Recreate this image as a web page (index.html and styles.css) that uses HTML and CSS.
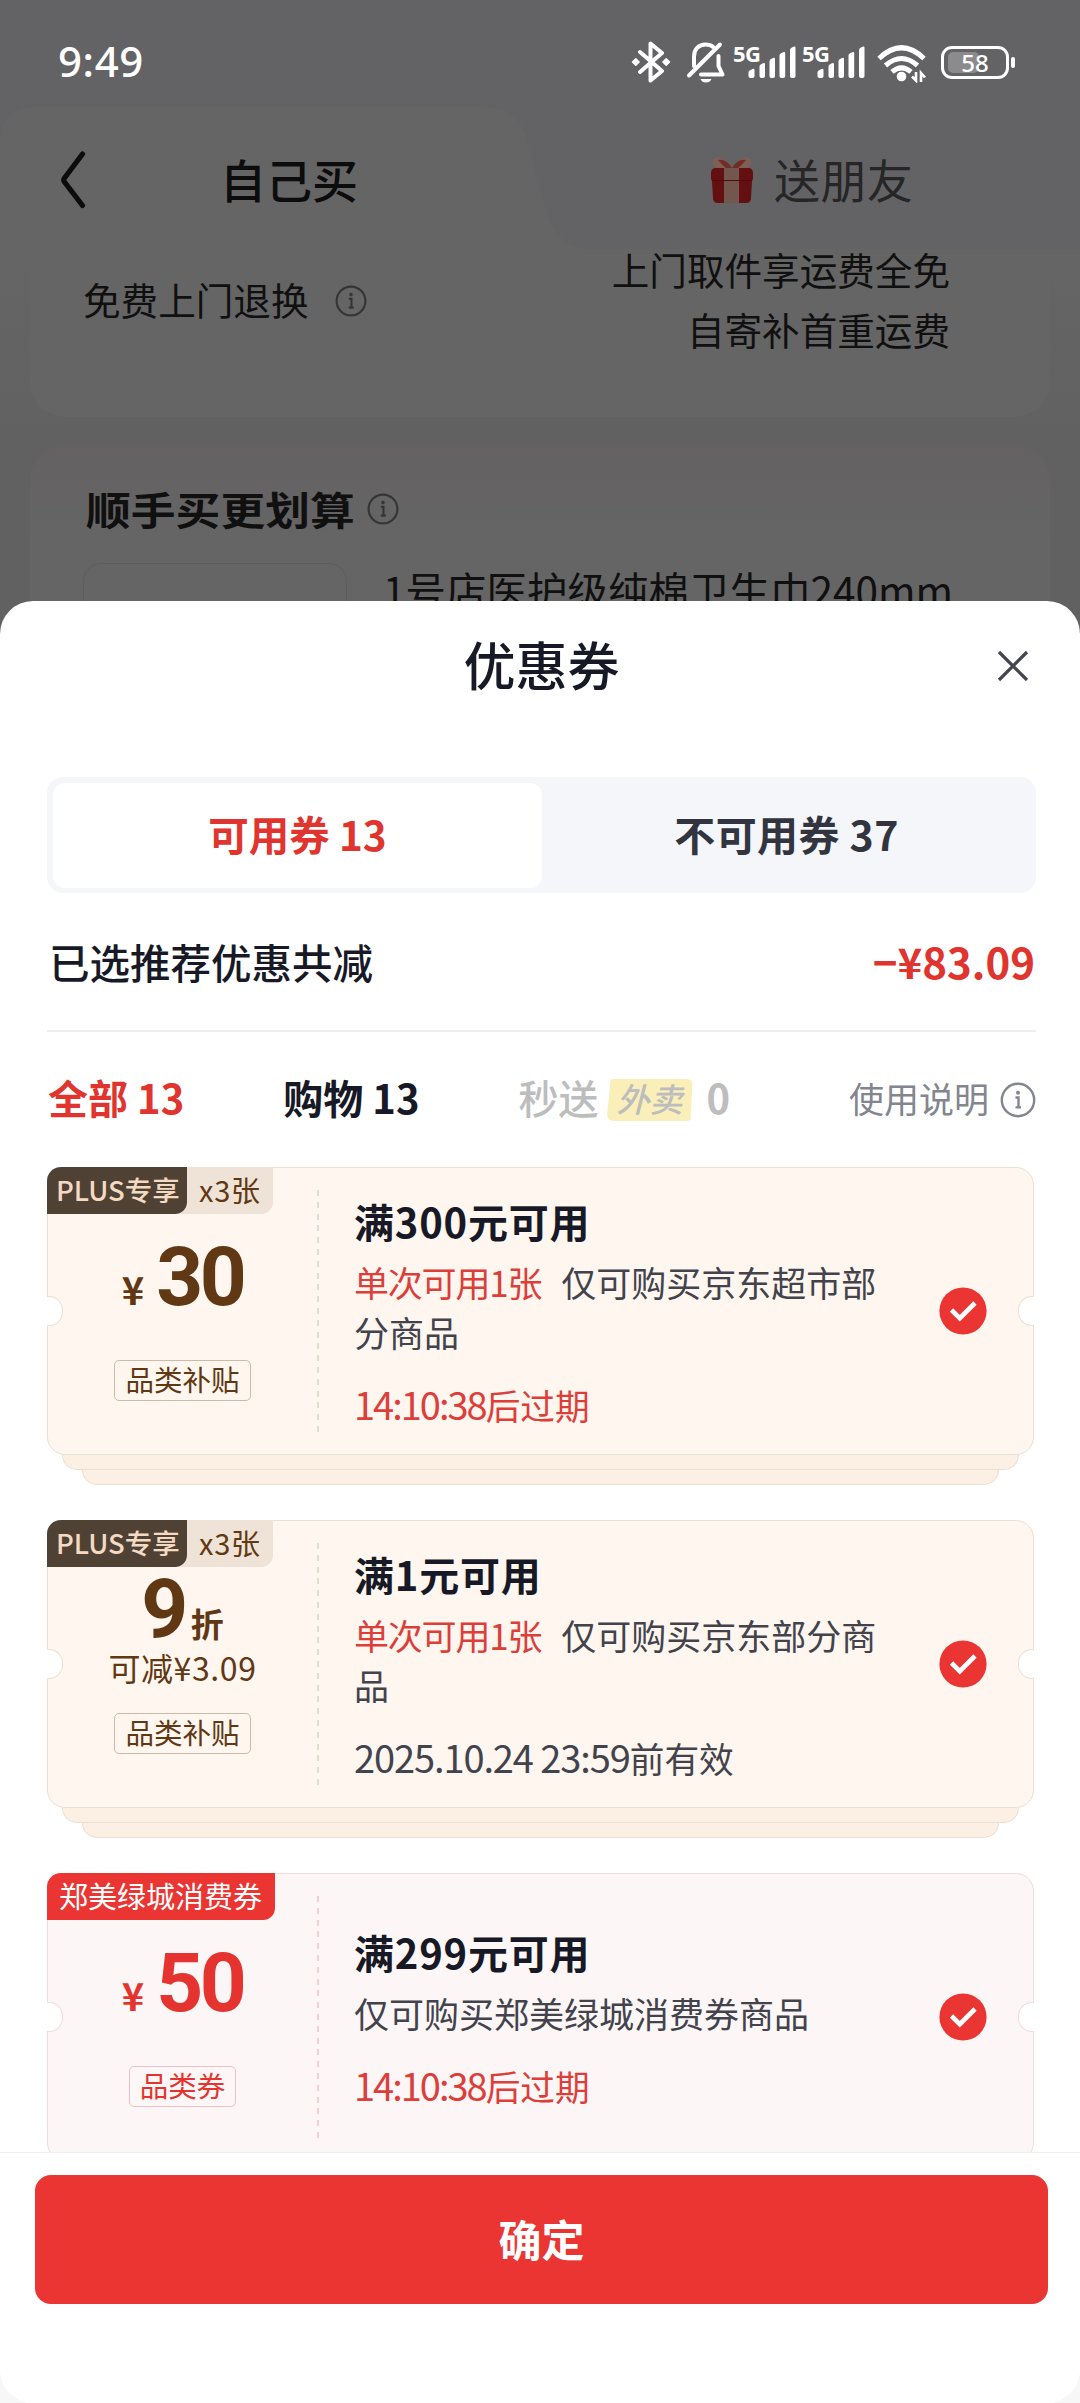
FILE: index.html
```html
<!DOCTYPE html>
<html lang="zh-CN">
<head>
<meta charset="utf-8">
<title>优惠券</title>
<link rel="stylesheet" href="styles.css">
</head>
<body>
<svg class="defs" aria-hidden="true">
  <symbol id="info" viewBox="0 0 36 36">
    <circle cx="18" cy="18" r="16.2" fill="none" stroke="currentColor" stroke-width="2.4"/>
    <circle cx="18" cy="10.8" r="2" fill="currentColor"/>
    <path d="M15.500 15.500h3v9.500M15.500 25.400h5.500" fill="none" stroke="currentColor" stroke-width="2.400"/>
  </symbol>
  <symbol id="check" viewBox="0 0 48 48">
    <circle cx="24" cy="24" r="23.6" fill="#ea3533"/>
    <path d="M12.500 23l8.300 8.200L36 16" fill="none" stroke="#fff" stroke-width="4.600"/>
  </symbol>
  <symbol id="signal" viewBox="0 0 63 34">
    <path d="M15.500 31v-3.500q0-1.500 1.500-2.200l2.500-1.200q2-.8 2 1V31q0 2-2 2H17.500q-2 0-2-2z"/>
    <path d="M26.500 31V21.500q0-1.500 1.500-2.200l2-1q2-.8 2 1V31q0 2-2 2h-1.500q-2 0-2-2z"/>
    <path d="M36.500 31V16.200q0-1.500 1.500-2.200l2-1q2-.8 2 1V31q0 2-2 2h-1.500q-2 0-2-2z"/>
    <path d="M46.500 31V10.500q0-1.500 1.500-2.200l2.200-1q2-.8 2 1V31q0 2-2 2h-1.700q-2 0-2-2z"/>
    <path d="M57 31V5q0-1.500 1.500-2.200l2-1q2-.8 2 1V31q0 2-2 2H59q-2 0-2-2z"/>
  </symbol>
</svg>

<div class="screen">
  <div class="page">
    <svg class="tab-shape" viewBox="0 0 1080 260" aria-hidden="true"><path d="M0 138Q4 107 34 107H482Q518 107 526 136L546 210Q557 249 592 249H1080V260H0z" fill="#656565"/></svg>
    <header class="status">
      <span class="clock">9:49</span>
      <div class="status-icons">
        <svg width="40" height="42" viewBox="0 0 40 42" fill="none" stroke="#fff" stroke-width="4" stroke-linejoin="round" stroke-linecap="round"><path d="M9 11l22 19-11.500 9.500V2.500L31 12 9 31"/><path d="M1.500 21l3.300-3.300L8.100 21l-3.300 3.300zM31.900 21l3.300-3.300 3.300 3.300-3.300 3.300z" fill="#fff" stroke="#fff" stroke-width="1.500"/></svg>
        <svg class="bell" width="40" height="42" viewBox="0 0 40 42" fill="none" stroke="#fff" stroke-width="4" stroke-linejoin="round" stroke-linecap="round"><path d="M8 25V15.500C8 8 13 3.500 19.500 3.500c3.500 0 6 1 8 2.800M32.500 15v10l4 8.500H15"/><path d="M3 34.500L34 3.500"/><path d="M14.500 38h11q-1.500 3.500-5.500 3.500T14.500 38z" fill="#fff" stroke="none"/></svg>
        <div class="cell"><span>5G</span><svg width="63" height="34" fill="#fff"><use href="#signal"/></svg></div>
        <div class="cell"><span>5G</span><svg width="63" height="34" fill="#fff"><use href="#signal"/></svg></div>
        <svg class="wifi" width="50" height="38" viewBox="0 0 50 38" fill="none" stroke="#fff" stroke-width="5"><path d="M2 13.500Q24.500-8 47 13.500M8.500 20.500q16-14 32 0M15 26.800q9.500-8 19 0"/><circle cx="24.500" cy="31.500" r="4.800" fill="#fff" stroke="none"/><path d="M39 27v8.500l-4-4M44 37v-9l4 4.500" stroke-width="2.600"/></svg>
        <div class="battery"><i></i><span>58</span></div>
      </div>
    </header>

    <nav class="top-tabs">
      <svg class="back" width="26" height="58" viewBox="0 0 26 58"><path d="M22.500 3L4.500 27Q3 29 4.500 31L22.500 54.500" fill="none" stroke="#0c0c0c" stroke-width="5.200" stroke-linecap="round"/></svg>
      <span class="self">自己买</span>
      <span class="gift">
        <svg width="44" height="48" viewBox="0 0 44 48"><path d="M22 12C14 1 7-1 3 4q-1 6 5 8zM22 12C30 1 37-1 41 4q1 6-5 8z" fill="#806056"/><path d="M22 12C17 4 12 3 8 4q4 5 9 9zM22 12C27 4 32 3 36 4q-4 5-9 9z" fill="#712c25"/><path d="M1 17q0-5 5-5h32q5 0 5 5v5q0 2-1 3l-1 17q0 5-5 5H8q-5 0-5-5L2 25q-1-1-1-3z" fill="#641010"/><path d="M14 12h15v35H14z" fill="#73564d"/><path d="M2 24.500h40" stroke="#500b0b" stroke-width="1"/></svg>
        送朋友
      </span>
    </nav>

    <section class="service">
      <div class="service-name">免费上门退换<svg class="info-sm"><use href="#info"/></svg></div>
      <div class="service-text">上门取件享运费全免<br>自寄补首重运费</div>
    </section>

    <section class="bundle">
      <div class="bundle-title"><span>顺手买更划算</span><svg class="info-sm"><use href="#info"/></svg></div>
      <div class="bundle-item"><div class="thumb"></div><span>1号店医护级纯棉卫生巾240mm</span></div>
    </section>
  </div>

  <main class="sheet">
    <header class="sheet-head">
      <h1>优惠券</h1>
      <svg class="close" width="32" height="32" viewBox="0 0 32 32"><path d="M2 2l28 28M30 2L2 30" stroke="#44464f" stroke-width="3.200"/></svg>
    </header>

    <div class="segments">
      <div class="segment on">可用券 13</div>
      <div class="segment">不可用券 37</div>
    </div>

    <div class="total"><span>已选推荐优惠共减</span><b>−¥83.09</b></div>

    <div class="filters">
      <span class="f on">全部 13</span>
      <span class="f">购物 13</span>
      <span class="f off">秒送<em>外卖</em><b>0</b></span>
      <span class="help">使用说明<svg><use href="#info"/></svg></span>
    </div>

    <div class="list">
      <article class="coupon">
        <div class="face">
          <div class="badges"><span class="plus">PLUS专享</span><span class="count">x3张</span></div>
          <div class="left">
            <div class="value"><div class="amount"><small>¥</small>30</div></div>
            <span class="tag">品类补贴</span>
          </div>
          <div class="right">
            <h2>满300元可用</h2>
            <p><em>单次可用1张</em>仅可购买京东超市部分商品</p>
            <div class="time red"><span>14:10:38</span>后过期</div>
          </div>
          <svg class="check"><use href="#check"/></svg>
        </div>
        <div class="layer"></div><div class="layer second"></div>
      </article>

      <article class="coupon">
        <div class="face">
          <div class="badges"><span class="plus">PLUS专享</span><span class="count">x3张</span></div>
          <div class="left">
            <div class="value discount"><div class="amount">9<i>折</i></div><div class="save">可减¥3.09</div></div>
            <span class="tag">品类补贴</span>
          </div>
          <div class="right">
            <h2>满1元可用</h2>
            <p><em>单次可用1张</em>仅可购买京东部分商品</p>
            <div class="time date"><span>2025.10.24 23:59</span>前有效</div>
          </div>
          <svg class="check"><use href="#check"/></svg>
        </div>
        <div class="layer"></div><div class="layer second"></div>
      </article>

      <article class="coupon pink">
        <div class="face">
          <div class="badges"><span class="city">郑美绿城消费券</span></div>
          <div class="left">
            <div class="value"><div class="amount"><small>¥</small>50</div></div>
            <span class="tag">品类券</span>
          </div>
          <div class="right">
            <h2>满299元可用</h2>
            <p>仅可购买郑美绿城消费券商品</p>
            <div class="time red"><span>14:10:38</span>后过期</div>
          </div>
          <svg class="check"><use href="#check"/></svg>
        </div>
      </article>
    </div>

    <footer><button>确定</button></footer>
  </main>
</div>
</body>
</html>
```
FILE: styles.css
```css
* { box-sizing: border-box; margin: 0; padding: 0; }
body {
  font-family: "Noto Sans CJK SC", sans-serif;
  color: #171a26;
  background: #f7f7f7;
}
em, i { font-style: normal; }
svg { display: block; flex: none; }
.defs { position: absolute; width: 0; height: 0; }
.screen {
  position: relative;
  width: 1080px;
  height: 2403px;
  overflow: hidden;
  background: #f7f7f7;
}

/* dimmed checkout page */
.page {
  position: relative;
  height: 700px;
  overflow: hidden;
  background: linear-gradient(#636366 0 249px, #656565 249px, #616161 460px);
  color: #101010;
}
.tab-shape { position: absolute; left: 0; top: 0; width: 1080px; height: 260px; }
.status {
  position: relative;
  display: flex;
  justify-content: space-between;
  height: 107px;
  padding: 41px 71px 0 58px;
  color: #fff;
}
.clock { font: 500 42px/44px "Noto Sans", sans-serif; letter-spacing: 0.6px; margin-top: -2px; }
.status-icons { display: flex; align-items: flex-start; }
.bell { margin-left: 15px; }
.cell { display: grid; margin: 4px 0 0 7px; }
.cell > * { grid-area: 1 / 1; }
.cell span { font: 700 22px/18px "Open Sans", sans-serif; height: 18px; letter-spacing: -0.5px; margin-top: -1px; }
.cell svg { width: 63px; height: 34px; }
.cell + .cell { margin-left: 6px; }
.wifi { margin: 4px 0 0 12px; }
.battery {
  position: relative;
  width: 68px;
  height: 33px;
  margin: 5px 0 0 14px;
  border: 3px solid #fff;
  border-radius: 11px;
  font: 500 24px/27px "Noto Sans", sans-serif;
  text-align: center;
}
.battery i { position: absolute; left: 4px; top: 3px; width: 31px; height: 21px; border-radius: 5px; background: #8b8b8d; }
.battery span { position: relative; }
.battery::after { content: ""; position: absolute; right: -9px; top: 8px; width: 4px; height: 11px; border-radius: 2px; background: #fff; }

.top-tabs { position: relative; display: flex; height: 142px; padding-top: 37px; font-size: 46px; line-height: 68px; }
.back { margin: 7px 0 0 60px; }
.self { margin-left: 134px; font-weight: 500; color: #0c0c0c; }
.gift { display: flex; gap: 20px; margin-left: 352px; color: #262626; letter-spacing: 0.4px; }
.gift svg { margin-top: 12px; }

.service {
  position: relative;
  display: flex;
  justify-content: space-between;
  height: 168px;
  margin: 0 30px;
  padding: 0 100px 0 53px;
  background: #656565;
  border-radius: 0 0 36px 36px;
  font-size: 37.600px;
  line-height: 60px;
}
.service-name { display: flex; padding-top: 20px; }
.info-sm { width: 32px; height: 32px; color: #353535; }
.service-name svg { margin: 16px 0 0 27px; }
.service-text { text-align: right; margin-top: -10px; }

.bundle {
  height: 300px;
  margin: 28px 30px 0;
  padding: 34px 54px 0 53px;
  border-radius: 36px;
  background: linear-gradient(#656162, #656565 90px);
}
.bundle-title { display: flex; height: 60px; font-weight: 700; font-size: 44.800px; line-height: 59px; }
.bundle-title span { width: 270px; margin-left: 3px; transform: scaleY(0.86); }
.bundle-title svg { margin: 14px 0 0 11px; }
.bundle-item { display: flex; margin-top: 24px; }
.bundle-item .thumb { width: 264px; height: 200px; border: 1px solid #5d5d5d; border-radius: 18px; }
.bundle-item span { margin-left: 36px; font-size: 40.500px; line-height: 54px; white-space: nowrap; }

/* bottom sheet */
.sheet {
  position: absolute;
  inset: 601px 0 0;
  display: flex;
  flex-direction: column;
  background: #fff;
  border-radius: 33px;
}
.sheet-head { display: grid; grid-template-columns: 100px 1fr 100px; align-items: center; height: 130px; margin-bottom: 46px; }
.sheet-head h1 { grid-column: 2; text-align: center; font-size: 52px; font-weight: 500; line-height: 70px; margin: -5px 0 0 3px; }
.close { margin-left: 17px; }
.segments {
  display: flex;
  height: 116px;
  margin: 0 44px 0 47px;
  padding: 6px 5px 5px 6px;
  background: #f4f6fa;
  border-radius: 16px;
}
.segment {
  flex: 1;
  border-radius: 12px;
  text-align: center;
  font-size: 41px;
  font-weight: 700;
  line-height: 101px;
  letter-spacing: 0.4px;
  color: #32353f;
}
.segment.on { background: #fff; color: #e0342f; font-size: 40.500px; letter-spacing: 0; }
.total {
  display: flex;
  justify-content: space-between;
  height: 139px;
  margin: 0 44px 0 47px;
  padding: 0 1px 0 2px;
  border-bottom: 2px solid #eeeef0;
  font-size: 40.500px;
  font-weight: 500;
  line-height: 138px;
}
.total b { color: #e0342f; font-weight: 700; font-size: 42px; line-height: 136px; }
.filters {
  display: flex;
  gap: 99px;
  height: 135px;
  flex: none;
  padding: 0 44px 0 48px;
  font-size: 40px;
  font-weight: 700;
  line-height: 131px;
}
.f.on { color: #e0342f; }
.f.off { display: flex; color: #bdbdbd; font-weight: 500; }
.f.off b { font-weight: 700; }
.f.off em {
  height: 42px;
  margin: 47px 14px 0 8px;
  padding: 0 10px;
  border-radius: 6px;
  clip-path: polygon(4px 0, 100% 0, calc(100% - 2px) 100%, 0 100%);
  background: #fbefb9;
  font-size: 33px;
  line-height: 39px;
  font-style: italic;
}
.help { display: flex; margin-left: auto; font-size: 35px; font-weight: 400; color: #83858f; }
.help svg { width: 36px; height: 36px; margin: 50px 0 0 11px; }

.list { flex: 1; min-height: 0; overflow: hidden; padding: 0 46px 0 47px; }
.coupon { margin-bottom: 35px; --line: #eadfd2; --ink: #603813; }
.face {
  position: relative;
  display: flex;
  height: 288px;
  background: #fff6ef;
  border: 1px solid var(--line);
  border-radius: 18px;
}
.face::before, .face::after {
  content: "";
  position: absolute;
  top: 128px;
  width: 15px;
  height: 28px;
  background: #fff;
  border: 1px solid var(--line);
}
.face::before { left: -1px; border-left: 0; border-radius: 0 14px 14px 0; }
.face::after { right: -1px; border-right: 0; border-radius: 14px 0 0 14px; }
.layer {
  height: 15px;
  margin: 0 15px;
  background: #fcefe4;
  border: 1px solid var(--line);
  border-top: 0;
  border-radius: 0 0 16px 16px;
}
.layer.second { margin: 0 35px; }
.badges {
  position: absolute;
  left: -1px;
  top: -1px;
  display: flex;
  height: 47px;
  font-size: 28px;
  line-height: 44px;
}
.plus {
  position: relative;
  z-index: 1;
  width: 140px;
  padding-left: 9px;
  border-radius: 14px 0 12px 0;
  background: #504135;
  color: #f4dac2;
  font-size: 27.500px;
  font-weight: 500;
  white-space: nowrap;
}
.count { width: 92px; margin-left: -6px; padding-left: 18px; border-radius: 0 0 12px 0; background: #efe3d7; color: var(--ink); font-size: 29px; white-space: nowrap; letter-spacing: 0.7px; }
.city { width: 228px; padding-left: 12px; border-radius: 14px 0 12px 0; background: #ea3533; color: #fff; font-size: 29px; white-space: nowrap; }
.left {
  display: flex;
  flex-direction: column;
  align-items: center;
  width: 269px;
  color: var(--ink);
}
.value { height: 192px; padding-top: 69px; }
.discount { padding-top: 48px; }
.amount { display: flex; justify-content: center; align-items: baseline; height: 73px; font: 700 82px/80px Roboto, "Noto Sans CJK SC", sans-serif; letter-spacing: -3.500px; }
.amount small, .amount i { font-family: "Noto Sans CJK SC", sans-serif; letter-spacing: 0; line-height: 40px; }
.amount small { font-size: 38px; margin-right: 12px; }
.amount i { font-size: 33px; margin-left: 6px; }
.save { margin-top: 4px; font-size: 32px; line-height: 42px; letter-spacing: 0.6px; }
.tag {
  height: 41px;
  padding: 0 10px;
  border: 1px solid #cdbba9;
  border-radius: 5px;
  font-size: 28.500px;
  line-height: 36px;
}
.right {
  position: relative;
  flex: 1;
  display: flex;
  flex-direction: column;
  justify-content: center;
  padding: 4px 140px 0 37px;
}
.right::before {
  content: "";
  position: absolute;
  left: 0;
  top: 22px;
  width: 2px;
  height: 242px;
  background: repeating-linear-gradient(var(--dash, #e6dace) 0 6px, transparent 6px 11.800px);
}
.right h2 { font-size: 40px; font-weight: 700; line-height: 50px; letter-spacing: 0.8px; }
.right p { margin: 11px 0 22px; font-size: 35px; line-height: 50px; color: #42434c; }
.right p em { color: #dc3e3a; letter-spacing: -1.200px; margin-right: 20px; }
.time { font-size: 34.700px; line-height: 50px; color: #42434c; }
.time span { font-size: 38px; letter-spacing: -2px; }
.date span { letter-spacing: -1.100px; }
.red { color: #dc3e3a; }
.check { position: absolute; right: 46px; top: 119px; width: 48px; height: 48px; }
.pink { --line: #f1dbdf; --ink: #e5332f; --dash: #f5ced4; }
.pink .face { background: #fdf6f6; }
.pink .tag { border-color: #efbfc8; }

footer { flex: none; height: 251px; padding: 22px 32px 0 35px; border-top: 1px solid #efefef; }
footer button {
  display: block;
  width: 100%;
  height: 129px;
  padding-bottom: 4px;
  border: 0;
  border-radius: 16px;
  background: #ea3533;
  color: #fff;
  font: 700 43px/64px "Noto Sans CJK SC", sans-serif;
}
```
